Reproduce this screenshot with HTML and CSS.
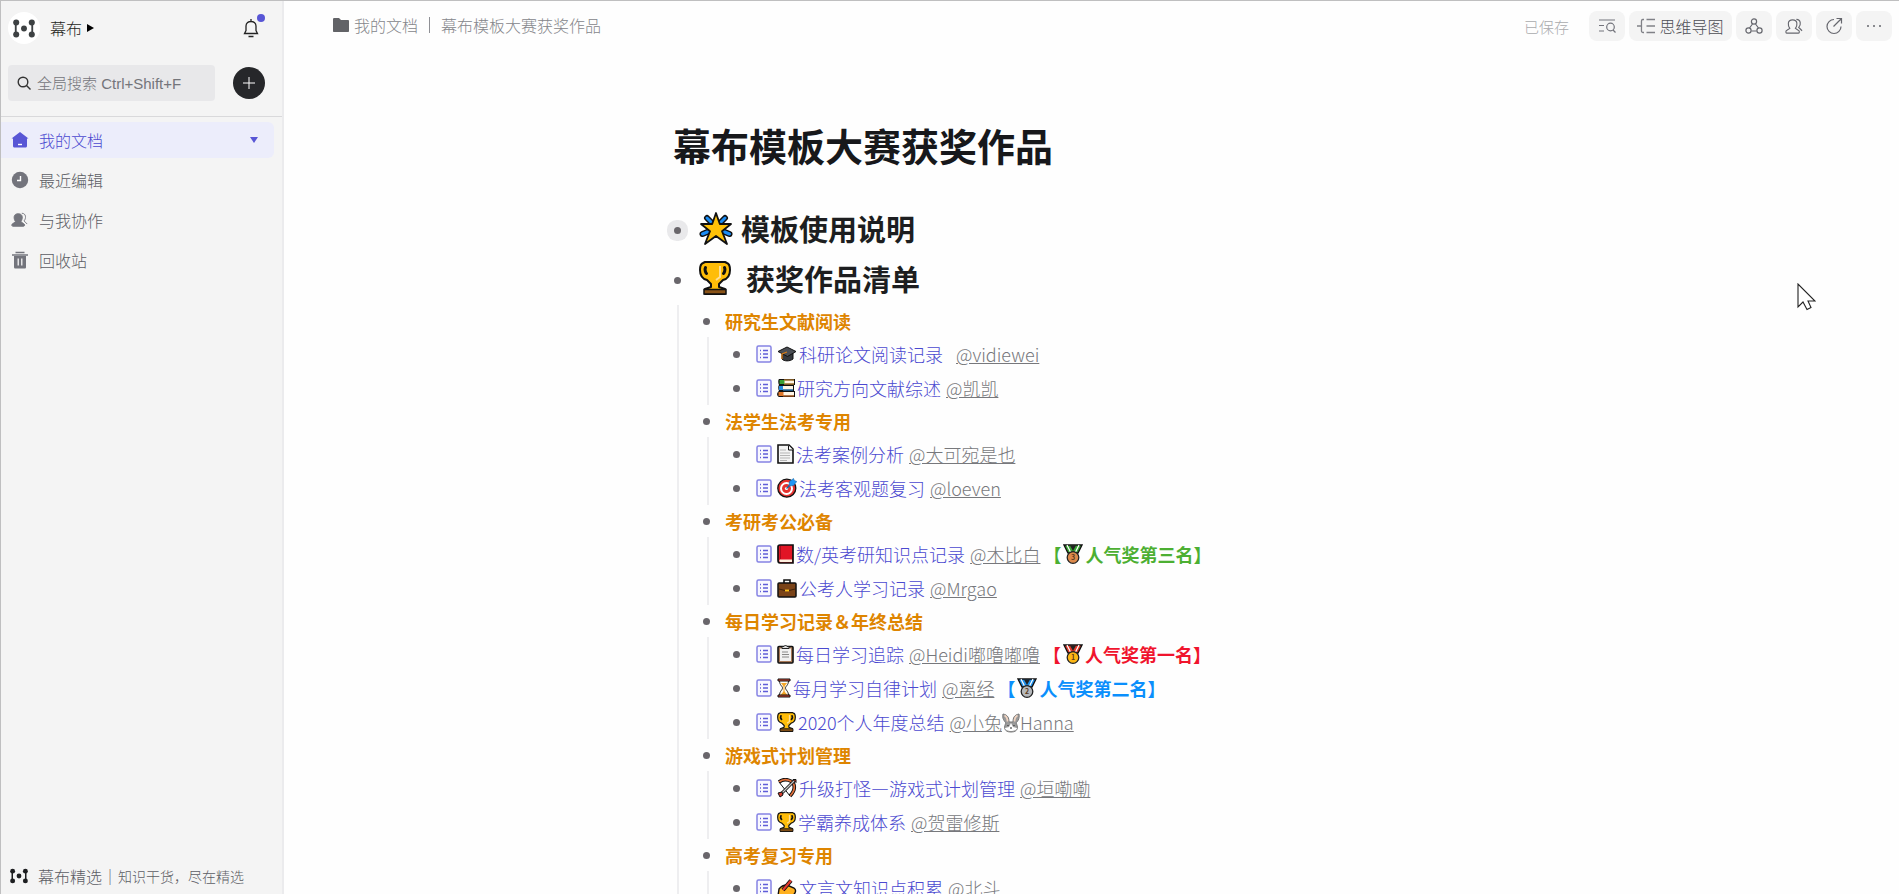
FILE: index.html
```
<!DOCTYPE html>
<html lang="zh-CN">

<head>
  <meta charset="UTF-8" />
  <meta name="viewport" content="width=device-width, initial-scale=1.0" />
  <title>幕布模板大赛获奖作品</title>
  <link rel="stylesheet" href="styles.css">
</head>

<body>
  <!-- shared icons -->
  <svg class="sprite" aria-hidden="true">
    <symbol id="logo" viewBox="0 0 24 20">
      <path d="M3 3v14M21 3v14" stroke="currentColor" stroke-width="2" />
      <g fill="currentColor">
        <circle cx="3.5" cy="3.5" r="3.3" /><circle cx="3.5" cy="16.5" r="3.3" />
        <circle cx="20.5" cy="3.5" r="3.3" /><circle cx="20.5" cy="16.5" r="3.3" />
        <circle cx="12" cy="10" r="3.2" />
      </g>
    </symbol>
    <symbol id="doc" viewBox="0 0 16 18">
      <rect x="1" y="1" width="14" height="16" rx="1.5" fill="#f8f8ff" stroke="#8583e4" stroke-width="1.5" />
      <path d="M4 5.5h1M4 9h1M4 12.5h1M7 5.5h5M7 9h5M7 12.5h5" stroke="#5f5dd8" stroke-width="1.3" />
    </symbol>
    <symbol id="star" viewBox="0 0 34 34">
      <path d="M8 7l5 5M26 7l-5 5M3.5 23l6-2.500M30.500 23l-6-2.500" stroke="#111" stroke-width="6" stroke-linecap="round" />
      <path d="M8 7l5 5M26 7l-5 5M3.500 23l6-2.500M30.500 23l-6-2.500" stroke="#1b8df5" stroke-width="3" stroke-linecap="round" />
      <path d="M17 2l3.800 11H32l-9 7.200L28 33l-11-8-11 8 5-12.800L2 13h11.200z" fill="#ffc107" stroke="#111" stroke-width="1.800" stroke-linejoin="round" />
    </symbol>
    <symbol id="trophy" viewBox="0 0 32 34">
      <path d="M4 2l2-1h20l2 1c3 1 3 4 3 7 0 6-3 9-7 10l-4 4v3l6 2v5H6v-5l6-2v-3l-4-4c-4-1-7-4-7-10 0-3 0-6 3-7z" fill="#ffbd08" stroke="#111" stroke-width="2" stroke-linejoin="round" />
      <path d="M6.500 6.500c-1 2 0 5 1 6M25.500 6.500c1 2 0 5-1 6" fill="none" stroke="#111" stroke-width="3" stroke-linecap="round" />
      <path d="M21 5v11l-4 3" fill="none" stroke="#ffdf95" stroke-width="2" />
      <path d="M5 28.500h22V33H5z" fill="#8a5317" stroke="#111" stroke-width="1.500" />
    </symbol>
    <symbol id="cap" viewBox="0 0 20 20">
      <path d="M5 9v6c2 2.500 8 2.500 11 0V9" fill="#35383d" stroke="#111" />
      <path d="M1 7.500L10 3l9 4.500-8.500 5z" fill="#4b4e54" stroke="#111" stroke-linejoin="round" />
      <path d="M10 8l-5 2v5" fill="none" stroke="#d77c17" stroke-width="1.300" />
    </symbol>
    <symbol id="books" viewBox="0 0 18 20">
      <path d="M2 1h16v6h-1v6h1v6H2c-3-1-2-5 0-6-1-2-1-5 0-6-1-2-1-5 0-6z" fill="#111" />
      <path d="M6 2.500h11v3H6M5 8h11v3.500H5M4 14h13v3.500H4" fill="#fff6e6" />
      <path d="M2.500 2h5v4h-5z" fill="#3a9f32" /><path d="M7 2h10M7 6h10" stroke="#e29a38" />
      <path d="M2 8h4v4H2z" fill="#268cde" /><path d="M6 12h10" stroke="#2a91e6" />
      <path d="M1.500 14h5v4h-5z" fill="#dd762a" /><path d="M6 18h11" stroke="#d86d22" />
    </symbol>
    <symbol id="page" viewBox="0 0 17 20">
      <path d="M1 1h11l4 4v14H1z" fill="#f4f4f4" stroke="#111" stroke-width="1.600" />
      <path d="M11.500 1.500V6H16" fill="#fff" stroke="#111" />
      <path d="M3 6h6M3 9h10M3 11.500h10M3 14h10M3 16.500h7" stroke="#b5b5b5" />
    </symbol>
    <symbol id="target" viewBox="0 0 20 20">
      <circle cx="9.800" cy="10.200" r="9" fill="#e6312d" stroke="#111" stroke-width="1.300" />
      <circle cx="9.500" cy="10.500" r="5.500" fill="none" stroke="#fff" stroke-width="2" />
      <circle cx="9.500" cy="10.500" r="1.600" fill="#fff" />
      <path d="M9.500 10.500L15 5" stroke="#1767a8" stroke-width="1.500" />
      <path d="M12 8l.5-4.500 4-3 .8 2 2.500 1-3.300 4z" fill="#2196f3" stroke="#1767a8" stroke-width=".6" />
    </symbol>
    <symbol id="book" viewBox="0 0 17 20">
      <path d="M3 1h13v18H3c-2 0-2-3-2-3V3c0-1 1-2 2-2z" fill="#e11525" stroke="#111" stroke-width="1.700" />
      <path d="M3 15.500h12v2.500H3.500C2 18 2 16 3 15.500z" fill="#fff1e0" />
      <path d="M3.500 2v13" stroke="#a90d1c" />
    </symbol>
    <symbol id="briefcase" viewBox="0 0 20 20">
      <path d="M7 5V2h6v3" fill="none" stroke="#111" stroke-width="1.600" />
      <rect x="1" y="5" width="18" height="14" rx="1" fill="#7a4318" stroke="#111" stroke-width="1.500" />
      <path d="M2 11l6 1.500h4l6-1.500" fill="none" stroke="#3f2008" />
      <path d="M8 12.500h4" stroke="#ffc21a" stroke-width="1.800" />
    </symbol>
    <symbol id="clipboard" viewBox="0 0 17 20">
      <rect x="1" y="2.500" width="15" height="16.500" rx="1" fill="#a97a58" stroke="#111" stroke-width="1.600" />
      <path d="M3 4.500h11v12.500H3z" fill="#f1f1f1" />
      <path d="M5 4.500h7V2.500H10L8.500 1 7 2.500H5z" fill="#ddd" stroke="#222" />
      <path d="M5 8h6M5 10.500h7M5 13h7" stroke="#888" />
    </symbol>
    <symbol id="hourglass" viewBox="0 0 14 20">
      <path d="M2.500 2.500h9c0 5-3 5.500-3 7.500s3 3 3 7.500h-9c0-4.500 3-5.500 3-7.500s-3-2.500-3-7.500z" fill="#fffaf0" stroke="#222" />
      <path d="M4 5h6l-3 4zM7 13l4 4.500H3z" fill="#f4a526" /><path d="M7 8v6" stroke="#f4a526" />
      <path d="M1 1h12v2H1zM1 17h12v2H1z" fill="#d94832" stroke="#111" />
    </symbol>
    <symbol id="bow" viewBox="0 0 20 20">
      <path d="M2 4c6-5 14-1 15 3 1 4-1 8-4 11" fill="none" stroke="#111" stroke-width="3.600" />
      <path d="M2 4c6-5 14-1 15 3 1 4-1 8-4 11" fill="none" stroke="#e2703a" stroke-width="1.700" />
      <path d="M2 4l11 14" stroke="#111" />
      <path d="M3 17L18 2" stroke="#111" stroke-width="3" /><path d="M3 17L18 2" stroke="#c9c9c9" stroke-width="1.200" />
      <path d="M16 1.500h3v3zM1 15l4-1 1 3-3 2z" fill="#d73c2e" stroke="#111" />
    </symbol>
    <symbol id="writing" viewBox="0 0 20 20">
      <path d="M2 11c3-4 6-4 8-4l7 3c3 2 1 6-1 7-4 3-10 2-12 0l-3 1z" fill="#ffb01e" stroke="#111" stroke-width="1.400" />
      <path d="M6 12L14 2.500" stroke="#111" stroke-width="4" /><path d="M6 12L14 2.500" stroke="#e33a2f" stroke-width="2.200" />
    </symbol>
    <symbol id="rabbit" viewBox="0 0 18 20">
      <path d="M1 1c5 1 6 4 6 8h4c0-4 1-7 6-8 1 5-2 8-3 9 2 3 3 9-5 9s-7-6-5-9C2 8 0 5 1 1z" fill="#9a9a9a" stroke="#777" />
      <path d="M2.500 2.500c2 1 3 4 3 6M15.500 2.500c-2 1-3 4-3 6" stroke="#f2d5c2" stroke-width="1.700" fill="none" />
      <path d="M9 10l2 4 4 1c0 4-12 4-12 0l4-1z" fill="#fff" />
      <path d="M6 12v1M12 12v1M8 15h2" stroke="#222" />
    </symbol>
    <symbol id="medal" viewBox="0 0 20 20">
      <path d="M1 1h18l-4 8H5z" fill="currentColor" stroke="#111" stroke-width="1.400" />
      <path d="M4 1l4 8M16 1l-4 8" stroke="#fff" stroke-width="1.200" />
      <path d="M7 1.500h6L10 7z" fill="#222" />
      <circle cx="10" cy="13.500" r="5.800" stroke="#222" stroke-width="1.300" />
    </symbol>
    <symbol id="people" viewBox="0 0 20 18">
      <path d="M8 2c6 0 5 6 3 9l3 2c2 1 1 3 0 3H2c-1 0-2-2 0-3l3-2C3 8 2 2 8 2z" />
      <path d="M12 1.500c5 0 5 6 2.500 8.500l3.500 3.500" fill="none" />
    </symbol>
  </svg>

  <div class="app">
    <aside class="sidebar">
      <div class="user-bar">
        <button class="user">
          <span class="avatar"><svg width="22" height="19"><use href="#logo" /></svg></span>
          幕布
          <svg class="caret" width="7" height="8"><path d="M0 0l7 4-7 4z" /></svg>
        </button>
        <button class="bell" aria-label="通知">
          <svg width="16" height="20" viewBox="0 0 16 20" fill="none" stroke="#222" stroke-width="1.300">
            <path d="M8 1v2M1.500 15.500h13l-1.500-3V8c0-6-10-6-10 0v4.500zM5.500 18.500h5" />
          </svg>
          <span class="badge"></span>
        </button>
      </div>

      <div class="search-bar">
        <label class="search">
          <svg width="14" height="14" viewBox="0 0 14 14" fill="none" stroke="#333" stroke-width="1.400">
            <circle cx="6" cy="6" r="4.800" /><path d="M9.500 9.500l4 4" />
          </svg>
          <input type="text" placeholder="全局搜索 Ctrl+Shift+F" aria-label="全局搜索" />
        </label>
        <button class="add" aria-label="新建">
          <svg width="12" height="12" stroke="#fff"><path d="M6 0v12M0 6h12" /></svg>
        </button>
      </div>

      <nav class="nav">
        <a href="#" class="nav-item active">
          <svg width="18" height="16" viewBox="0 0 18 16"><path d="M9 0l8.500 6.500H16V14c0 1-1 1.500-1.500 1.500h-11C3 15.500 2 15 2 14V6.500H.5z" fill="#5856d5" /><path d="M7 12.500h4" stroke="#fff" stroke-width="1.400" /></svg>
          我的文档
          <svg class="down" width="8" height="6"><path d="M0 0h8L4 6z" fill="#5856d5" /></svg>
        </a>
        <a href="#" class="nav-item">
          <svg width="18" height="18" viewBox="0 0 18 18"><circle cx="9" cy="9" r="8.200" fill="#73747c" /><path d="M9.500 5v4.500H6" fill="none" stroke="#fff" stroke-width="1.400" /></svg>
          最近编辑
        </a>
        <a href="#" class="nav-item">
          <svg width="18" height="18" fill="#73747c" stroke="#73747c"><use href="#people" /></svg>
          与我协作
        </a>
        <a href="#" class="nav-item">
          <svg width="18" height="18" viewBox="0 0 18 18"><path d="M4.500 1.500h9M1 4h16" stroke="#73747c" stroke-width="1.600" /><path d="M3 5h12v11c0 1-.5 1.500-1.500 1.500h-9C3.500 17.500 3 17 3 16z" fill="#73747c" /><path d="M7.200 7.500v7M10.800 7.500v7" stroke="#fff" stroke-width="1.200" /></svg>
          回收站
        </a>
      </nav>

      <a href="#" class="featured">
        <svg width="18" height="16"><use href="#logo" /></svg>
        <span>幕布精选｜</span><small>知识干货，尽在精选</small>
      </a>
    </aside>

    <main class="main">
      <header class="topbar">
        <div class="crumbs">
          <svg width="16" height="16" viewBox="0 0 16 16"><path d="M0 2.500C0 1.500.5 1 1 1h5l2 2h7c.6 0 1 .5 1 1v10c0 .6-.4 1-1 1H1c-.6 0-1-.4-1-1z" fill="#626367" /></svg>
          <a href="#">我的文档</a>
          <i class="bar"></i>
          <span>幕布模板大赛获奖作品</span>
        </div>
        <div class="tools">
          <span class="saved">已保存</span>
          <button aria-label="查找">
            <svg width="18" height="16" viewBox="0 0 18 16" fill="none" stroke="#73747c" stroke-width="1.200"><path d="M1 2h16M1 7.500h5M1 13h5" /><circle cx="12.500" cy="9" r="3.800" /><path d="M15 12l2.500 2.500" /></svg>
          </button>
          <button class="mind">
            <svg width="18" height="16" viewBox="0 0 18 16" fill="none" stroke="#808187" stroke-width="1.300"><path d="M7 1.500H6C4 1.500 4.500 3 4.500 8S4 14.500 6 14.500h1M0 8h4M9.500 1.500H18M9.500 8H18M9.500 14.500H18" /></svg>
            思维导图
          </button>
          <button aria-label="协作">
            <svg width="18" height="16" viewBox="0 0 18 16" fill="none" stroke="#66676e" stroke-width="1.200"><circle cx="9" cy="3.500" r="2.600" /><circle cx="3.500" cy="12.500" r="2.600" /><circle cx="14.500" cy="12.500" r="2.600" /><path d="M7.500 6l-3 4M10.500 6l3 4M6.500 13h5" /></svg>
          </button>
          <button aria-label="成员">
            <svg width="19" height="17" fill="none" stroke="#66676e" stroke-width="1.200"><use href="#people" /></svg>
          </button>
          <button aria-label="分享">
            <svg width="18" height="18" viewBox="0 0 18 18" fill="none" stroke="#66676e" stroke-width="1.200"><path d="M9 2.500a7 7 0 1 0 7 7M8.500 9.500L16 2M11.500 1.500h5v5" /></svg>
          </button>
          <button aria-label="更多">
            <svg width="16" height="4" fill="#66676e"><circle cx="2" cy="2" r="1" /><circle cx="8" cy="2" r="1" /><circle cx="14" cy="2" r="1" /></svg>
          </button>
        </div>
      </header>

      <article class="doc">
        <h1>幕布模板大赛获奖作品</h1>
        <ul class="outline">
          <li>
            <h2 class="row folded"><svg width="34" height="34"><use href="#star" /></svg>模板使用说明</h2>
          </li>
          <li>
            <h2 class="row"><svg class="cup" width="32" height="34"><use href="#trophy" /></svg>获奖作品清单</h2>
            <ul>
              <li>
                <h3 class="row">研究生文献阅读</h3>
                <ul>
                  <li class="row"><a href="#" class="tpl"><svg class="ico" width="16" height="18"><use href="#doc" /></svg><svg width="20" height="20"><use href="#cap" /></svg>科研论文阅读记录</a><a href="#" class="author far">@vidiewei</a></li>
                  <li class="row"><a href="#" class="tpl"><svg class="ico" width="16" height="18"><use href="#doc" /></svg><svg width="18" height="20"><use href="#books" /></svg>研究方向文献综述</a><a href="#" class="author">@凯凯</a></li>
                </ul>
              </li>
              <li>
                <h3 class="row">法学生法考专用</h3>
                <ul>
                  <li class="row"><a href="#" class="tpl"><svg class="ico" width="16" height="18"><use href="#doc" /></svg><svg width="17" height="20"><use href="#page" /></svg>法考案例分析</a><a href="#" class="author">@大可宛是也</a></li>
                  <li class="row"><a href="#" class="tpl"><svg class="ico" width="16" height="18"><use href="#doc" /></svg><svg width="20" height="20"><use href="#target" /></svg>法考客观题复习</a><a href="#" class="author">@loeven</a></li>
                </ul>
              </li>
              <li>
                <h3 class="row">考研考公必备</h3>
                <ul>
                  <li class="row"><a href="#" class="tpl"><svg class="ico" width="16" height="18"><use href="#doc" /></svg><svg width="17" height="20"><use href="#book" /></svg>数/英考研知识点记录</a><a href="#" class="author">@木比白</a><b class="prize green">【<svg width="20" height="22" viewBox="0 0 20 20" fill="#dd8a4b" color="#3aa435"><use href="#medal" /><text x="10" y="16">3</text></svg>人气奖第三名】</b></li>
                  <li class="row"><a href="#" class="tpl"><svg class="ico" width="16" height="18"><use href="#doc" /></svg><svg width="20" height="20"><use href="#briefcase" /></svg>公考人学习记录</a><a href="#" class="author">@Mrgao</a></li>
                </ul>
              </li>
              <li>
                <h3 class="row">每日学习记录＆年终总结</h3>
                <ul>
                  <li class="row"><a href="#" class="tpl"><svg class="ico" width="16" height="18"><use href="#doc" /></svg><svg width="17" height="20"><use href="#clipboard" /></svg>每日学习追踪</a><a href="#" class="author">@Heidi嘟噜嘟噜</a><b class="prize red">【<svg width="20" height="22" viewBox="0 0 20 20" fill="#fdb714" color="#e0392c"><use href="#medal" /><text x="10" y="16">1</text></svg>人气奖第一名】</b></li>
                  <li class="row"><a href="#" class="tpl"><svg class="ico" width="16" height="18"><use href="#doc" /></svg><svg width="14" height="20"><use href="#hourglass" /></svg>每月学习自律计划</a><a href="#" class="author">@离经</a><b class="prize blue">【<svg width="20" height="22" viewBox="0 0 20 20" fill="#b5b8bb" color="#1f8fe8"><use href="#medal" /><text x="10" y="16">2</text></svg>人气奖第二名】</b></li>
                  <li class="row"><a href="#" class="tpl"><svg class="ico" width="16" height="18"><use href="#doc" /></svg><svg width="19" height="20"><use href="#trophy" /></svg>2020个人年度总结</a><a href="#" class="author">@小兔<svg width="18" height="20"><use href="#rabbit" /></svg>Hanna</a></li>
                </ul>
              </li>
              <li>
                <h3 class="row">游戏式计划管理</h3>
                <ul>
                  <li class="row"><a href="#" class="tpl"><svg class="ico" width="16" height="18"><use href="#doc" /></svg><svg width="20" height="20"><use href="#bow" /></svg>升级打怪—游戏式计划管理</a><a href="#" class="author">@垣嘞嘞</a></li>
                  <li class="row"><a href="#" class="tpl"><svg class="ico" width="16" height="18"><use href="#doc" /></svg><svg width="19" height="20"><use href="#trophy" /></svg>学霸养成体系</a><a href="#" class="author">@贺雷修斯</a></li>
                </ul>
              </li>
              <li>
                <h3 class="row">高考复习专用</h3>
                <ul>
                  <li class="row"><a href="#" class="tpl"><svg class="ico" width="16" height="18"><use href="#doc" /></svg><svg width="20" height="20"><use href="#writing" /></svg>文言文知识点积累</a><a href="#" class="author">@北斗</a></li>
                </ul>
              </li>
            </ul>
          </li>
        </ul>
      </article>
    </main>
  </div>

  <svg class="cursor" width="19" height="28" viewBox="0 0 19 28"><path d="M1 1v23l5-5 4 7.500 4-2-3-6.500h7z" fill="#fff" stroke="#222" stroke-width="1.100" /></svg>
</body>

</html>
```
FILE: styles.css
```
* {
  box-sizing: border-box;
}

body {
  margin: 0;
  font-family: "Noto Sans CJK SC", sans-serif;
  font-size: 16px;
  font-weight: 300;
  color: #1d1e20;
  background: #fefefe;
  overflow: hidden;
}

a {
  color: inherit;
  text-decoration: none;
}

button {
  border: none;
  padding: 0;
  background: none;
  font: inherit;
  color: inherit;
  cursor: pointer;
}

ul {
  list-style: none;
  margin: 0;
  padding: 0;
}

svg {
  flex: none;
}

.sprite {
  position: absolute;
  width: 0;
  height: 0;
}

.app {
  display: flex;
  height: 100vh;
  border-top: 1px solid #bfbfc0;
}

/* sidebar */
.sidebar {
  display: flex;
  flex-direction: column;
  flex: none;
  width: 284px;
  background: #f4f4f4;
  border-left: 1px solid #bfbfc0;
  border-right: 2px solid #ebebed;
}

.user-bar {
  display: flex;
  justify-content: space-between;
  align-items: center;
  padding: 11px 23px 0 7px;
}

.user {
  display: flex;
  align-items: center;
}

.avatar {
  display: flex;
  align-items: center;
  justify-content: center;
  width: 32px;
  height: 32px;
  margin-right: 10px;
  border-radius: 50%;
  background: #fff;
  color: #3d4143;
}

.caret {
  margin-left: 5px;
}

.bell {
  position: relative;
  display: flex;
}

.badge {
  position: absolute;
  top: -4px;
  right: -6px;
  width: 8px;
  height: 8px;
  border-radius: 50%;
  background: #5856d5;
}

.search-bar {
  display: flex;
  justify-content: space-between;
  align-items: center;
  padding: 21px 17px 15px 7px;
  border-bottom: 1px solid #d9d9db;
}

.search {
  display: flex;
  align-items: center;
  gap: 6px;
  width: 207px;
  height: 36px;
  padding-left: 9px;
  border-radius: 4px;
  background: #e8e8ea;
}

.search input {
  flex: 1;
  min-width: 0;
  border: none;
  outline: none;
  padding: 0;
  background: none;
  font-family: "Liberation Sans", "Noto Sans CJK SC", sans-serif;
  font-size: 15px;
  font-weight: 300;
}

.search input::placeholder {
  color: #74757b;
}

.add {
  display: flex;
  align-items: center;
  justify-content: center;
  width: 32px;
  height: 32px;
  border-radius: 50%;
  background: #26272a;
}

.nav {
  flex: 1;
  display: flex;
  flex-direction: column;
  gap: 4px;
  padding: 5px 8px 0 0;
}

.nav-item {
  display: flex;
  align-items: center;
  gap: 10px;
  height: 36px;
  padding: 0 16px 0 10px;
  border-radius: 0 6px 6px 0;
  color: #5c5d64;
}

.nav-item.active {
  background: #ecedfb;
  color: #4b49d0;
}

.down {
  margin-left: auto;
}

.featured {
  display: flex;
  align-items: center;
  height: 36px;
  padding-left: 9px;
  color: #1d1e20;
}

.featured span {
  margin-left: 10px;
  color: #5c5d64;
}

.featured small {
  font-size: 14px;
  color: #5c5d64;
}

/* top bar */
.main {
  flex: 1;
  min-width: 0;
  overflow: hidden;
}

.topbar {
  display: flex;
  justify-content: space-between;
  align-items: center;
  height: 50px;
  padding: 0 7px 0 49px;
}

.crumbs {
  display: flex;
  align-items: center;
  padding-bottom: 2px;
  color: #85868b;
}

.crumbs a {
  margin-left: 5px;
}

.bar {
  width: 1px;
  height: 16px;
  margin: 0 11px;
  background: #8f9095;
}

.tools {
  display: flex;
  align-items: center;
  gap: 4px;
}

.saved {
  margin-right: 16px;
  font-size: 15px;
  color: #a9aaad;
}

.tools button {
  display: flex;
  align-items: center;
  justify-content: center;
  width: 36px;
  height: 30px;
  border-radius: 8px;
  background: #f4f4f4;
}

.tools .mind {
  width: 103px;
  gap: 4px;
  color: #4c4d53;
}

/* document */
.doc {
  max-width: 837px;
  margin: 0 auto;
  padding-top: 69px;
}

h1 {
  margin: 0 0 35px;
  font-size: 38px;
  line-height: 50px;
  font-weight: 700;
  color: #17181b;
}

.outline ul {
  margin-left: 4px;
  padding-left: 24px;
  border-left: 2px solid #eeeef0;
}

.row {
  display: flex;
  align-items: center;
  height: 34px;
  margin: 0;
  font-size: 18px;
  white-space: nowrap;
}

.row::before {
  content: "";
  flex: none;
  width: 7px;
  height: 7px;
  margin: 0 15px 0 0;
  border-radius: 50%;
  background: #69666b;
}

h2.row {
  height: 50px;
  padding-bottom: 4px;
  font-size: 29px;
  font-weight: 700;
}

h2.row::before {
  margin: 4px 18px 0 1px;
}

h2.folded::before {
  box-shadow: 0 0 0 7px #e9e9eb;
}

h2 svg {
  margin-right: 8px;
}

h2 .cup {
  margin-right: 15px;
}

h3.row {
  height: 32px;
  font-weight: 700;
  color: #de8500;
}

.tpl {
  display: flex;
  align-items: center;
  margin-left: 1px;
  color: #4b49d0;
}

.tpl svg {
  margin-right: 2px;
}

.tpl .ico {
  margin-right: 5px;
}

.author {
  margin-left: 5px;
  color: #77787c;
  text-decoration: underline;
}

.author.far {
  margin-left: 13px;
}

.author svg {
  vertical-align: -3px;
}

.prize {
  display: flex;
  align-items: center;
  margin-left: 3px;
  font-weight: 700;
}

.prize svg {
  margin: 0 2px;
}

.prize text {
  font-size: 7px;
  text-anchor: middle;
  fill: #5a3a20;
}

.green {
  color: #4caf32;
}

.red {
  color: #f0142d;
}

.blue {
  color: #0a8ffc;
}

.cursor {
  position: absolute;
  top: 283px;
  right: 83px;
}
```
